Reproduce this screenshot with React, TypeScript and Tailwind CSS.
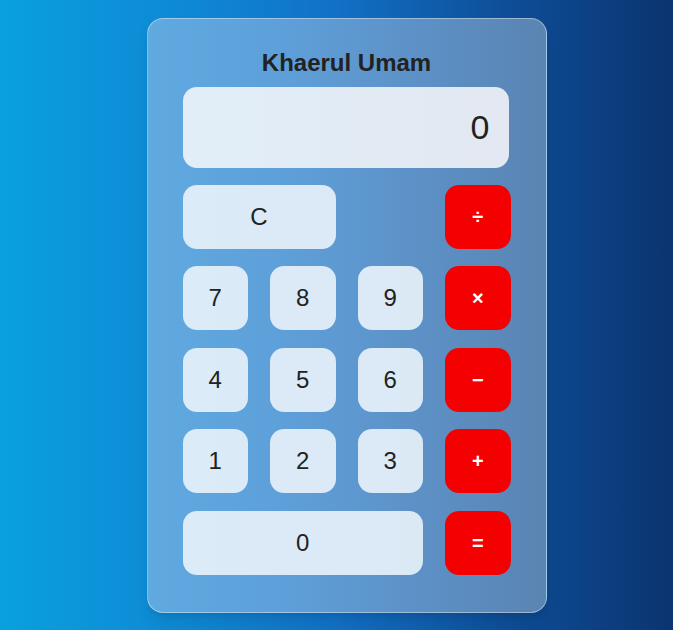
import React from "react";

const light =
  "flex items-center justify-center h-[64px] rounded-[14px] bg-[#e2eef8]/95 text-[#222] text-[24px]";
const red =
  "flex items-center justify-center h-[64px] rounded-[14px] bg-[#f50000] text-white text-[20px] font-bold";

export default function App() {
  return (
    <div
      className="min-h-screen w-full flex items-center justify-center pl-5 bg-[linear-gradient(90deg,#0aa0e0_0%,#0f86d2_30%,#1270c6_50%,#0e4e98_75%,#0b3470_100%)]"
      style={{ fontFamily: '"Liberation Sans", Arial, sans-serif' }}
    >
      <div className="w-[400px] h-[595px] rounded-[16px] border border-white/40 bg-[linear-gradient(90deg,#5faae0_0%,#5e9fd9_35%,#5d92c8_65%,#5a84b2_100%)] px-[35px] pt-[27px] flex flex-col shadow-lg">
        <h1 className="text-center text-[24px] font-bold text-[#222] leading-[34px]">
          Khaerul Umam
        </h1>
        <div className="mt-[7px] mr-[2px] h-[81px] rounded-[14px] bg-[linear-gradient(90deg,#e1eef8,#e3e8f2)] flex items-center justify-end pr-[19px] text-[34px] text-[#222]">
          0
        </div>
        <div className="mt-[17px] grid grid-cols-4 gap-x-[22px] gap-y-[17.5px]">
          <button className={`${light} col-span-2`}>C</button>
          <div />
          <button className={red}>÷</button>
          <button className={light}>7</button>
          <button className={light}>8</button>
          <button className={light}>9</button>
          <button className={red}>×</button>
          <button className={light}>4</button>
          <button className={light}>5</button>
          <button className={light}>6</button>
          <button className={red}>−</button>
          <button className={light}>1</button>
          <button className={light}>2</button>
          <button className={light}>3</button>
          <button className={red}>+</button>
          <button className={`${light} col-span-3`}>0</button>
          <button className={red}>=</button>
        </div>
      </div>
    </div>
  );
}
